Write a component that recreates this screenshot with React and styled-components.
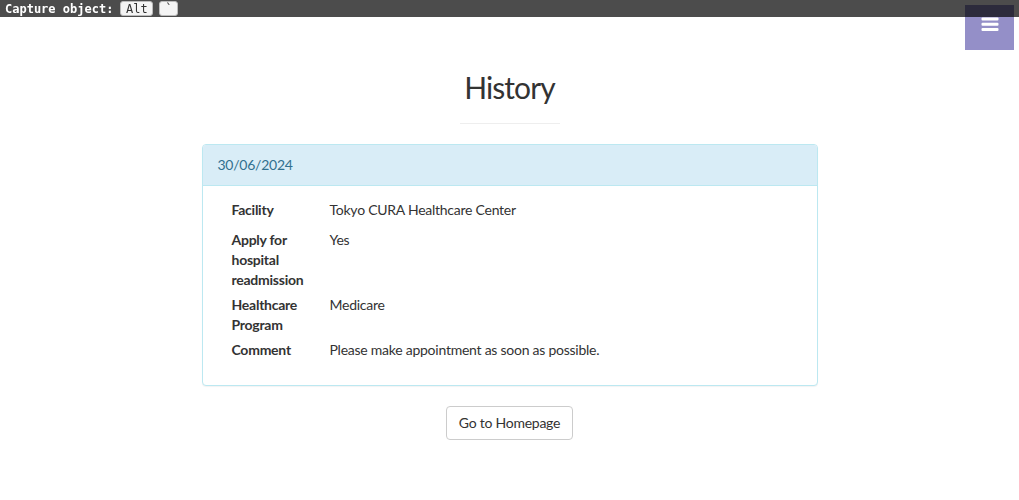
import React from "react";
import styled, { createGlobalStyle } from "styled-components";

const Global = createGlobalStyle`
  html, body { margin: 0; padding: 0; background: #fff; }
  body {
    font-family: Lato, "Liberation Sans", sans-serif;
    font-size: 14px;
    line-height: 20px;
    letter-spacing: -0.25px;
    color: #333;
  }
  * { box-sizing: border-box; }
`;

const CaptureBar = styled.div`
  position: fixed;
  top: 0;
  left: 0;
  right: 0;
  height: 17px;
  background: rgba(0, 0, 0, 0.7);
  z-index: 10;
  display: flex;
  align-items: center;
  gap: 6px;
  padding-left: 5px;
  font-family: "DejaVu Sans Mono", "Liberation Mono", monospace;
  font-weight: bold;
  font-size: 12px;
  letter-spacing: 0;
  color: #fff;
  line-height: 1;
`;

const Key = styled.span`
  display: inline-flex;
  align-items: center;
  justify-content: center;
  height: 15px;
  min-width: ${(p) => p.$w}px;
  padding: 0 4px;
  background: #f4f4f4;
  border: 1px solid #bbb;
  border-radius: 3px;
  color: #333;
  font-weight: normal;
  font-size: 12px;
  margin-left: ${(p) => p.$ml || 0}px;
`;

const MenuToggle = styled.a`
  position: fixed;
  top: 5px;
  right: 5px;
  width: 49px;
  height: 45px;
  background: #948fc8;
  display: flex;
  align-items: center;
  justify-content: center;
  padding-bottom: 6px;
  z-index: 5;
`;

const Page = styled.div`
  padding-top: 67px;
  display: flex;
  flex-direction: column;
  align-items: center;
`;

const Title = styled.h2`
  margin: 0;
  font-weight: 400;
  font-size: 30px;
  line-height: 40px;
  letter-spacing: -0.9px;
  color: #333;
`;

const Rule = styled.hr`
  width: 100px;
  margin: 16px 0 20px;
  border: 0;
  border-top: 1px solid #eee;
`;

const Panel = styled.div`
  width: 616px;
  border: 1px solid #bce8f1;
  border-radius: 4px;
  background: #fff;
  box-shadow: 0 1px 1px rgba(0, 0, 0, 0.05);
`;

const PanelHeading = styled.div`
  height: 41px;
  padding: 10px 15px;
  background: #d9edf7;
  border-bottom: 1px solid #bce8f1;
  color: #31708f;
  border-radius: 3px 3px 0 0;
`;

const PanelBody = styled.div`
  padding: 14px 30px 20px 29px;
`;

const Row = styled.div`
  display: grid;
  grid-template-columns: 83px 1fr;
  column-gap: 15px;
  margin-bottom: ${(p) => p.$mb}px;
`;

const Label = styled.div`
  font-weight: 700;
  color: #333;
`;

const Value = styled.div`
  color: #333;
`;

const Button = styled.button`
  margin-top: 20px;
  height: 34px;
  padding: 6px 12px;
  font-family: inherit;
  font-size: 14px;
  line-height: 20px;
  letter-spacing: -0.25px;
  color: #333;
  background: #fff;
  border: 1px solid #ccc;
  border-radius: 4px;
  cursor: pointer;
`;

const rows = [
  ["Facility", "Tokyo CURA Healthcare Center", 10],
  ["Apply for hospital readmission", "Yes", 5],
  ["Healthcare Program", "Medicare", 5],
  ["Comment", "Please make appointment as soon as possible.", 5],
];

export default function App() {
  return (
    <>
      <Global />
      <CaptureBar>
        Capture object:
        <Key $w={33} $ml={1}>Alt</Key>
        <Key $w={19}>`</Key>
      </CaptureBar>
      <MenuToggle>
        <svg width="18" height="15" viewBox="0 0 18 15">
          <rect x="0.5" y="0.5" width="17" height="3" rx="1" fill="#fff" />
          <rect x="0.5" y="5.8" width="17" height="3" rx="1" fill="#fff" />
          <rect x="0.5" y="11.1" width="17" height="3" rx="1" fill="#fff" />
        </svg>
      </MenuToggle>
      <Page>
        <Title>History</Title>
        <Rule />
        <Panel>
          <PanelHeading>30/06/2024</PanelHeading>
          <PanelBody>
            {rows.map(([l, v, mb]) => (
              <Row key={l} $mb={mb}>
                <Label>{l}</Label>
                <Value>{v}</Value>
              </Row>
            ))}
          </PanelBody>
        </Panel>
        <Button>Go to Homepage</Button>
      </Page>
    </>
  );
}
